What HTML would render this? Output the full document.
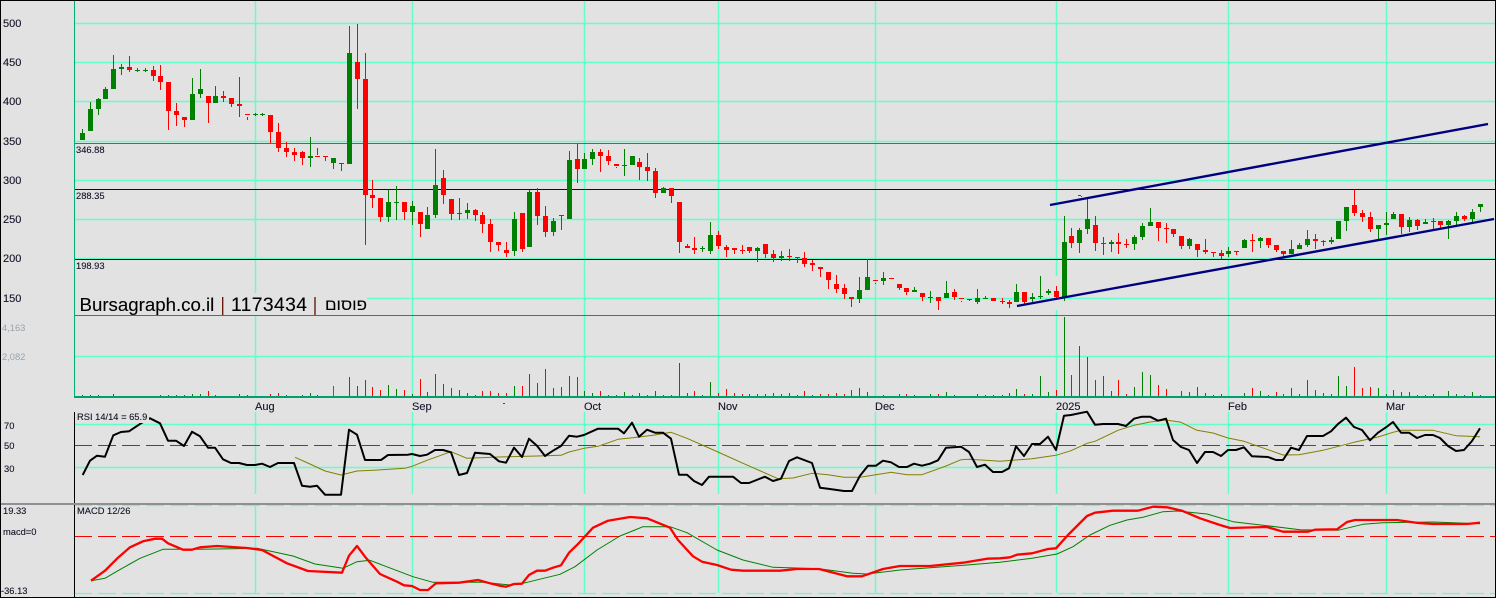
<!DOCTYPE html>
<html><head><meta charset="utf-8"><title>Bursagraph chart</title>
<style>html,body{margin:0;padding:0;background:#e2e2e2}svg{display:block}
text{font-family:"Liberation Sans",Arial,sans-serif;fill:#14142a;stroke:#14142a;stroke-width:.12}
.a{font-size:11px}.s{font-size:9.33px}.g{fill:#98a4ae;stroke:none}</style></head><body>
<svg xmlns="http://www.w3.org/2000/svg" width="1496" height="598" viewBox="0 0 1496 598">
<rect width="1496" height="598" fill="#e2e2e2"/>
<g fill="none">
<path stroke="#62ffca" stroke-width="1.5" d="M75 23.5H1495M75 62.5H1495M75 101.5H1495M75 141.5H1495M75 180.5H1495M75 219.5H1495M75 258.5H1495M75 298.5H1495M75 356.5H1495M75 424.5H1495M75 467.5H1495
M255.5 1V396M412.5 1V396M584.5 1V396M718.5 1V396M875.5 1V396M1056.5 1V276M1056.5 310V396M1228.5 1V396M1386.5 1V396
M255.5 412V494M412.5 412V494M584.5 412V494M718.5 412V494M875.5 412V494M1056.5 412V494M1228.5 412V494M1386.5 412V494
M255.5 506V593M412.5 506V593M584.5 506V593M718.5 506V593M875.5 506V593M1056.5 506V593M1228.5 506V593M1386.5 506V593"/>
<path stroke="#62ffca" stroke-width="1.3" stroke-dasharray="18 6" d="M74 505.5H1495M74 593.5H1495"/>
</g>
<g fill="none" shape-rendering="crispEdges">
<path stroke="#ff0000" stroke-dasharray="18 6" d="M74 445.5H1495M74 536.5H1495"/>
<path stroke="#e010d0" d="M75 143.5H1495"/>
<path stroke="#000080" d="M75 189.5H1495M75 259.5H1495"/>
<path stroke="#109068" d="M75 315.5H1495"/>
<path stroke="#00b078" stroke-width="1" d="M74.5 1V398"/>
<path stroke="#00a070" stroke-width="2" d="M74 397H1495"/>
<path stroke="#000" d="M74.5 412V503M74.5 505V597"/>
<path stroke="#909090" stroke-width="2" d="M1 504H1495"/>
<!-- volume -->
<path stroke="#008000" d="M113.5 394V396M192.5 394V396M200.5 394V396M215.5 395V396M310.5 393V396M317.5 395V396M349.5 377V396M388.5 385V396M396.5 389V396M412.5 394V396M427.5 392V396M435.5 374V396M459.5 390V396M467.5 393V396M475.5 395V396M514.5 386V396M529.5 374V396M553.5 388V396M561.5 387V396M569.5 376V396M584.5 391V396M592.5 393V396M624.5 392V396M632.5 395V396M663.5 395V396M702.5 395V396M710.5 382V396M757.5 394V396M781.5 394V396M859.5 388V396M867.5 392V396M883.5 395V396M914.5 395V396M930.5 394V396M946.5 392V396M977.5 394V396M985.5 395V396M1016.5 389V396M1032.5 394V396M1040.5 376V396M1048.5 392V396M1064.5 317V396M1079.5 346V396M1087.5 357V396M1111.5 391V396M1134.5 387V396M1142.5 372V396M1150.5 375V396M1189.5 392V396M1244.5 393V396M1260.5 391V396M1291.5 388V396M1299.5 394V396M1307.5 380V396M1331.5 394V396M1338.5 376V396M1346.5 386V396M1378.5 388V396M1386.5 394V396M1393.5 390V396M1409.5 392V396M1425.5 395V396M1433.5 394V396M1448.5 391V396M1456.5 394V396M1472.5 392V396M1480.5 395V396"/>
<path stroke="#ff0000" d="M82.5 395V396M90.5 395V396M98.5 395V396M160.5 395V396M168.5 395V396M176.5 395V396M184.5 395V396M208.5 391V396M239.5 394V396M247.5 395V396M270.5 394V396M278.5 393V396M286.5 395V396M302.5 395V396M357.5 386V396M365.5 380V396M372.5 387V396M380.5 390V396M404.5 390V396M420.5 379V396M443.5 384V396M451.5 388V396M482.5 391V396M490.5 391V396M498.5 393V396M506.5 393V396M522.5 386V396M537.5 383V396M545.5 369V396M577.5 377V396M600.5 391V396M608.5 395V396M616.5 395V396M639.5 393V396M647.5 395V396M655.5 391V396M671.5 395V396M679.5 363V396M687.5 393V396M694.5 391V396M718.5 393V396M726.5 389V396M734.5 393V396M742.5 394V396M749.5 394V396M765.5 394V396M773.5 393V396M789.5 393V396M797.5 395V396M804.5 391V396M812.5 395V396M820.5 394V396M828.5 394V396M836.5 393V396M844.5 394V396M851.5 390V396M899.5 394V396M906.5 394V396M938.5 394V396M954.5 395V396M993.5 395V396M1002.5 395V396M1009.5 393V396M1024.5 394V396M1056.5 390V396M1071.5 375V396M1095.5 380V396M1103.5 376V396M1118.5 380V396M1126.5 394V396M1158.5 385V396M1166.5 389V396M1181.5 391V396M1197.5 387V396M1205.5 393V396M1213.5 395V396M1221.5 394V396M1252.5 388V396M1268.5 395V396M1276.5 392V396M1283.5 394V396M1315.5 390V396M1323.5 393V396M1354.5 367V396M1362.5 388V396M1370.5 387V396M1401.5 392V396M1417.5 395V396M1464.5 395V396"/>
<path stroke="#d010c8" d="M333.5 386V396"/>
<!-- green wicks -->
<path stroke="#008000" d="M82.5 129V140M90.5 102V131M98.5 98V115M105.5 87V99M113.5 55V89M121.5 64V75M137.5 68V72M145.5 68V72M192.5 78V120M200.5 69V98M215.5 86V103M255.5 113V116M262.5 113V116M310.5 137V167M333.5 158V169M349.5 26V164M388.5 190V222M396.5 186V220M412.5 201V225M427.5 207V229M435.5 149V218M459.5 198V220M467.5 203V219M514.5 212V256M529.5 190V247M553.5 218V236M569.5 151V219M584.5 153V169M592.5 149V165M624.5 149V176M663.5 187V193M702.5 246V252M710.5 222V254M757.5 247V262M781.5 251V261M859.5 277V303M867.5 259V290M883.5 272V285M914.5 287V292M930.5 291V303M946.5 281V298M969.5 299V301M977.5 289V304M985.5 296V299M1016.5 284V302M1032.5 293V302M1040.5 276V299M1048.5 289V295M1064.5 216V301M1079.5 228V253M1087.5 199V234M1111.5 240V252M1134.5 235V250M1142.5 223V240M1150.5 208V226M1189.5 238V249M1228.5 247V257M1244.5 239V248M1260.5 237V248M1291.5 240V254M1299.5 243V249M1307.5 230V247M1331.5 237V244M1338.5 221V239M1346.5 207V231M1378.5 225V240M1386.5 212V235M1393.5 212V219M1409.5 217V232M1425.5 219V224M1433.5 218V230M1448.5 220V239M1456.5 212V226M1472.5 209V222M1480.5 204V212"/>
<!-- green bodies -->
<path stroke="#008000" stroke-width="5" d="M82.5 133V140M90.5 109V131M98.5 99V109M105.5 89V99M113.5 69V89M121.5 67V69M137.5 70V71M145.5 70V71M192.5 94V120M200.5 89V94M215.5 96V103M255.5 114V115M262.5 114V115M310.5 156V158M333.5 158V163M349.5 53V164M388.5 202V217M396.5 202V203M412.5 206V212M427.5 215V229M435.5 185V215M459.5 213V214M467.5 210V213M514.5 219V251M529.5 192V247M553.5 221V232M569.5 160V219M584.5 159V169M592.5 152V159M624.5 165V166M632.5 156V165M663.5 188V193M702.5 248V249M710.5 235V251M757.5 248V251M781.5 256V258M859.5 290V299M867.5 277V290M883.5 278V281M914.5 290V292M930.5 297V298M946.5 293V298M969.5 299V300M977.5 298V302M985.5 298V299M1016.5 292V302M1032.5 297V299M1040.5 296V297M1048.5 291V293M1064.5 242V297M1079.5 230V243M1087.5 219V229M1111.5 242V244M1134.5 237V244M1142.5 226V237M1150.5 222V226M1189.5 239V246M1228.5 251V254M1244.5 240V248M1260.5 238V241M1291.5 249V254M1299.5 245V249M1307.5 239V245M1331.5 240V242M1338.5 221V239M1346.5 207V221M1378.5 225V229M1386.5 223V225M1393.5 214V219M1409.5 220V227M1425.5 222V224M1433.5 221V222M1448.5 221V225M1456.5 216V221M1472.5 212V219M1480.5 204V207"/>
<!-- red wicks -->
<path stroke="#ff0000" d="M129.5 56V72M153.5 66V81M160.5 65V90M168.5 82V130M176.5 103V126M184.5 117V127M208.5 96V123M223.5 91V102M231.5 98V107M239.5 77V117M247.5 117V120M270.5 115V143M278.5 123V152M286.5 142V157M294.5 148V161M302.5 151V165M317.5 148V155M325.5 156V161M341.5 163V171M357.5 24V109M365.5 53V245M372.5 180V208M380.5 198V222M404.5 202V220M420.5 212V237M443.5 170V204M451.5 199V220M475.5 209V221M482.5 212V233M490.5 219V252M498.5 242V251M506.5 242V257M522.5 213V252M537.5 188V225M545.5 206V237M561.5 215V230M577.5 144V183M600.5 149V172M608.5 150V165M616.5 167V168M639.5 158V180M647.5 153V181M655.5 168V198M671.5 188V203M679.5 202V253M687.5 244V248M694.5 237V254M718.5 231V249M726.5 245V257M734.5 248V254M742.5 245V254M749.5 247V253M765.5 244V258M773.5 250V262M789.5 249V261M797.5 257V263M804.5 252V267M812.5 260V271M820.5 267V277M828.5 272V289M836.5 275V293M844.5 284V299M851.5 297V307M875.5 283V284M899.5 284V290M906.5 288V295M922.5 293V301M938.5 297V310M954.5 289V300M961.5 301V302M1002.5 298V304M1009.5 300V308M1024.5 292V304M1056.5 286V298M1071.5 228V248M1095.5 216V251M1103.5 237V255M1118.5 233V254M1126.5 239V248M1158.5 222V241M1166.5 223V243M1173.5 229V237M1181.5 236V249M1197.5 244V257M1205.5 239V254M1213.5 252V257M1221.5 250V259M1236.5 251V255M1252.5 234V252M1268.5 238V248M1276.5 245V252M1283.5 251V257M1315.5 234V249M1323.5 240V246M1354.5 190V216M1362.5 210V222M1370.5 212V232M1401.5 214V234M1417.5 219V230M1440.5 221V229M1464.5 215V221M1078 195.5H1081M1081.5 196V197"/>
<!-- red bodies -->
<path stroke="#ff0000" stroke-width="5" d="M129.5 67V70M153.5 70V76M160.5 76V82M168.5 82V111M176.5 111V115M184.5 117V120M208.5 96V103M223.5 96V98M231.5 98V104M239.5 104V106M247.5 114V115M270.5 115V132M278.5 132V148M286.5 148V152M294.5 152V155M302.5 152V158M317.5 156V157M325.5 156V157M341.5 163V164M357.5 62V79M365.5 79V195M372.5 195V198M380.5 198V217M404.5 202V212M420.5 212V224M443.5 178V195M451.5 199V214M475.5 210V215M482.5 215V224M490.5 224V242M498.5 242V245M506.5 250V253M522.5 213V249M537.5 192V216M545.5 216V232M561.5 215V216M577.5 159V169M600.5 152V156M608.5 156V161M616.5 164V166M639.5 162V167M647.5 167V171M655.5 171V193M671.5 188V196M679.5 202V242M687.5 246V248M694.5 248V250M718.5 235V246M726.5 247V250M734.5 248V250M742.5 250V251M749.5 247V251M765.5 244V254M773.5 254V258M789.5 256V257M797.5 257V258M804.5 258V264M812.5 263V265M820.5 267V269M828.5 272V280M836.5 284V289M844.5 288V294M851.5 297V299M875.5 280V281M891.5 278V279M899.5 284V288M906.5 288V292M922.5 293V297M938.5 297V301M954.5 292V297M961.5 298V299M993.5 298V301M1002.5 301V302M1009.5 302V304M1024.5 292V302M1056.5 291V297M1071.5 236V243M1095.5 225V243M1103.5 243V244M1118.5 242V244M1126.5 244V245M1158.5 222V228M1166.5 228V229M1173.5 229V234M1181.5 236V246M1197.5 244V250M1205.5 250V252M1213.5 252V253M1221.5 253V256M1236.5 251V252M1252.5 240V241M1268.5 238V245M1276.5 245V250M1283.5 251V254M1315.5 239V241M1323.5 241V242M1354.5 205V213M1362.5 213V217M1370.5 217V229M1401.5 214V227M1417.5 220V226M1440.5 221V225M1464.5 216V219"/>
<rect x="75" y="293" width="292" height="22" fill="#e2e2e2" stroke="none"/>
<path stroke="#a000e0" d="M503 403.5H505"/>
</g>
<g fill="none" stroke-linejoin="round">
<path stroke="#000080" stroke-width="2.4" d="M1050 205L1488 124M1017 306L1494 219"/>
<path stroke="#808000" d="M295 457.3L310 464L325 471L341 475L357 471L373 470.3L405 468.3L412 466.3L427 460.3L451 451.7L467 458.3L499 457L537 456L561 455.3L569 452L584 448.3L598 446.3L618 439.3L639 437L655 435L671 432.3L687 438.3L718 452L743 463.3L778 478.7L793 478L812 473.3L828 474.7L844 477.3L860 477.3L891 472.3L907 474.7L922 474.7L946 466L961 459.7L969 459.3L993 460.7L1000 461.3L1032 458.7L1056 455.3L1071 450.7L1087 443.3L1095 441.3L1118 430.3L1134 425.3L1150 422L1166 420L1181 422.3L1197 430.3L1213 433L1228 438L1244 441.3L1268 449.7L1283 455L1299 454.7L1323 450.3L1354 442.3L1378 437L1393 432.3L1401 430.3L1433 430.3L1456 435.7L1480 436.7"/>
<path stroke="#000" stroke-width="2" d="M82.7 475L90 460.7L97 455.7L105 456.7L113.3 435.3L121 432L129 431.3L141 423.3L150 418.3L160 423.3L168 440.7L176 440.7L184 446L192 431.7L200 436.3L208 447.7L215 447.7L223 459.3L231 463L239 463L247 465L255 465L262 463.7L270 467L278 463L294 463L302 485.7L310 486.7L317 485.7L325 494.7L341 494.7L349 429.7L357 434.7L365 460L381 460L388 455L408 454.7L412 454L420 456L427 454.7L435 450L443 450L451 452.3L459 475L467 473L475 452.7L490 454L499 461.3L506 462.7L514 447.7L522 457L529 438.7L537 445.7L545 456L553 450.7L561 446L569 435.7L577 436.7L584 435L598 428.7L618 428.7L624 433.3L632 422.7L639 436.7L647 429.7L655 432.7L663 432.7L671 438.7L679 474.7L687 474.7L694 481L702 485L709 476.7L733 476.7L741 483L749 483L765 476.7L773 481L781 478.7L789 461L797 457.3L812 463L820 487.7L828 488.7L844 491L852 491L860 475.7L868 465.7L876 465.7L883 460.7L891 462.3L899 467L907 467L914 463.7L922 465.7L930 463.7L938 460.3L946 447.7L961 446.7L969 452L977 467L985 464.7L993 472L1002 472L1009 468.3L1016 446.3L1024 456L1032 444L1040 444L1048 436.7L1056 450L1064 415.7L1071 415L1087 411.7L1095 424.7L1103 424L1118 424L1126 426L1134 418.7L1142 416.7L1150 416.7L1158 420.7L1166 418.7L1173 440L1181 447L1189 450L1197 463L1205 452L1213 452L1221 456L1228 450L1236 450L1244 447.3L1252 456.3L1268 457L1276 460L1283 460L1291 447.7L1299 450L1307 436L1323 436L1331 431.3L1338 424L1346 417.7L1354 427L1362 430L1370 440.3L1378 432.7L1386 427.3L1393 422L1401 432.7L1409 432.7L1417 438L1425 435L1433 435L1440 438L1448 446L1456 451L1464 450L1472 441L1480 428.3"/>
<path stroke="#008000" d="M91 580.7L105 578.3L118 570.7L140 558.3L163 549.3L200 549.3L257 548.3L293 556L315 564L343 568.3L357 561.7L370 560.3L383 565.3L413 576.7L433 582.3L483 582.3L500 584L510 585L523 583.3L560 574.3L575 566.7L597 550L620 536L643 526.7L670 526.7L687 532.7L717 550L743 560L773 567.3L819 568.7L853 573.3L867 574L900 570L967 565L1000 562.3L1032 558.3L1057 554L1073 546.7L1090 535L1110 525.3L1127 520L1143 517.3L1163 511.7L1177 511L1207 514L1233 521.7L1267 525.7L1300 529.7L1338 530.3L1363 524.3L1383 522.7L1433 522L1480 523.7"/>
<path stroke="#ff0000" stroke-width="2.3" d="M91 580.7L105 570.7L118 557.7L130 547.3L143 541.3L155 538.7L162 538.7L168 543.3L183 549.7L192 549.7L200 547.3L217 546L247 548L262 550L287 563.3L308 571L342 572.7L349 555.7L357 546L365 556.7L380 574L397 581.7L404 585.3L412 586L420 590L428 590L436 583.3L459 582.7L478 580L490 583.3L500 585.7L506 586.7L514 584L522 583.7L529 575L537 570.7L545 570.7L553 567.7L561 565.3L569 552.7L578 544L593 527.7L608 520.7L630 517L647 518.3L670 527.7L678 540L693 556.3L702 561.7L717 565L731 569.7L743 570.7L780 570.7L797 569L819 569L847 576.3L862 576.3L883 569L900 566L930 566L963 562.7L987 558.7L1000 558.3L1010 557.3L1017 554.7L1032 553.3L1048 549L1056 548.3L1068 535L1087 516L1095 512.7L1113 510.7L1138 510.7L1153 506.7L1167 507.3L1182 510.7L1200 518.3L1220 525L1230 528L1267 527L1283 531.7L1308 531.7L1315 529.7L1337 529.3L1347 522L1355 520L1397 520L1418 523L1433 524L1467 524L1480 522.7"/>
</g>
<rect x="76" y="411" width="73" height="12" fill="#e2e2e2"/>
<path fill="none" stroke="#000" stroke-width="1" shape-rendering="crispEdges" d="M0.5 0V598M0 0.5H1496M0 597.5H1496M1495.5 0V598"/>
<text class="a" x="3" y="27">500</text><text class="a" x="3" y="66">450</text><text class="a" x="3" y="105">400</text><text class="a" x="3" y="145">350</text><text class="a" x="3" y="184">300</text><text class="a" x="3" y="223">250</text><text class="a" x="3" y="262">200</text><text class="a" x="3" y="302">150</text>
<text class="s g" x="2" y="331">4,163</text><text class="s g" x="2" y="360">2,082</text>
<text class="s" x="76" y="153">346.88</text><text class="s" x="76" y="199">288.35</text><text class="s" x="76" y="269">198.93</text>
<text x="79.5" y="311" font-size="18.67" style="fill:#000">Bursagraph.co.il</text>
<path stroke="#601000" stroke-width="1.3" fill="none" d="M222.7 297V315M315 297V315"/>
<text x="231" y="311" font-size="19.3" textLength="76" style="fill:#000">1173434</text>
<text x="367" y="310" font-size="15.5" text-anchor="end" textLength="42" lengthAdjust="spacingAndGlyphs" style="fill:#000;font-family:'Liberation Sans','DejaVu Sans',sans-serif">פוסום</text>
<text class="a" x="255" y="410">Aug</text><text class="a" x="412" y="410">Sep</text><text class="a" x="584" y="410">Oct</text><text class="a" x="718" y="410">Nov</text><text class="a" x="875" y="410">Dec</text><text class="a" x="1056" y="410">2025</text><text class="a" x="1228" y="410">Feb</text><text class="a" x="1386" y="410">Mar</text>
<text class="s" x="77" y="420">RSI 14/14 = 65.9</text>
<text class="s" x="4" y="429">70</text><text class="s" x="4" y="449">50</text><text class="s" x="4" y="472">30</text>
<text class="s" x="3" y="514">19.33</text><text class="s" x="3" y="535">macd=0</text><text class="s" x="1" y="594">-36.13</text>
<text class="s" x="77" y="514">MACD 12/26</text>
</svg>
</body></html>
